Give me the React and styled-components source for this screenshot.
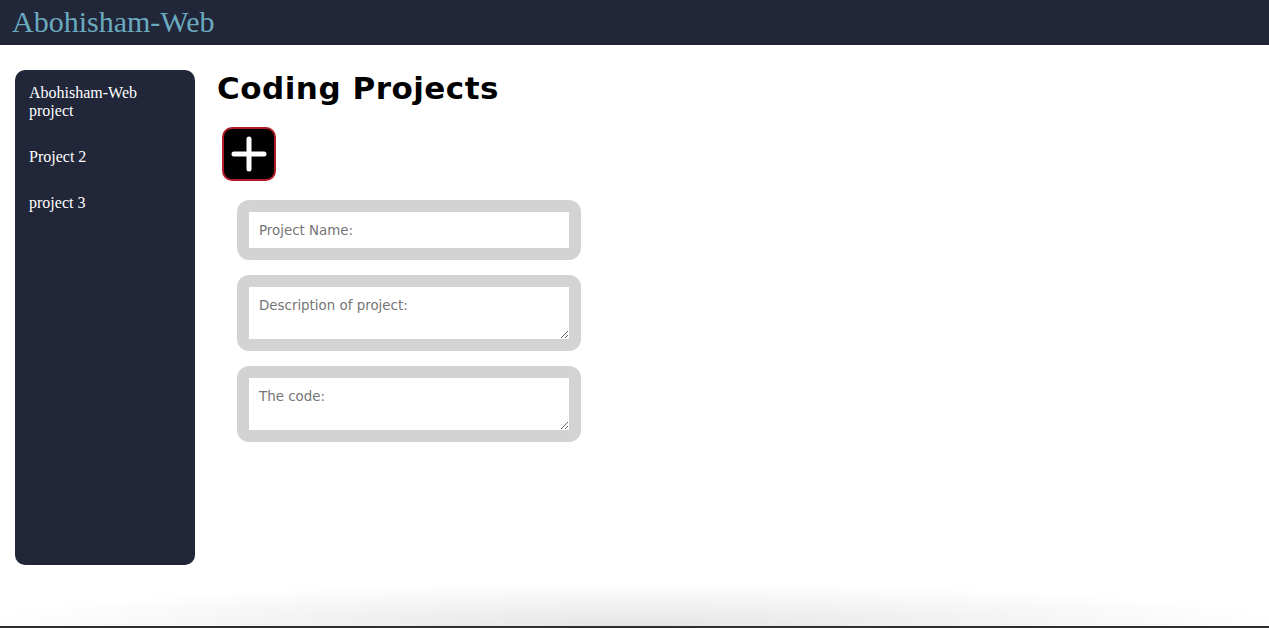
import React from "react";
import styled, { createGlobalStyle } from "styled-components";

const GlobalStyle = createGlobalStyle`
  html, body {
    margin: 0;
    padding: 0;
    background: #ffffff;
  }
  body {
    font-family: "Liberation Serif", "Times New Roman", serif;
    overflow: hidden;
  }
`;

const Page = styled.div`
  width: 1269px;
  height: 628px;
  display: flex;
  flex-direction: column;
  position: relative;
  overflow: hidden;
  background: #ffffff;
`;

const TopBar = styled.header`
  height: 45px;
  background-color: #212639;
  display: flex;
  align-items: center;
  padding: 0 12px;
  flex-shrink: 0;
`;

const Brand = styled.div`
  font-family: "Liberation Serif", "Times New Roman", serif;
  font-size: 30px;
  color: #6aaabf;
  line-height: 1;
  margin-top: -1px;
`;

const Body = styled.div`
  display: flex;
  align-items: flex-start;
  padding: 25px 15px 0 15px;
  gap: 22px;
  flex: 1;
`;

const Sidebar = styled.nav`
  width: 180px;
  height: 495px;
  background-color: #212639;
  border-radius: 10px;
  padding: 14px 14px;
  box-sizing: border-box;
  display: flex;
  flex-direction: column;
  gap: 28px;
  flex-shrink: 0;
`;

const SideItem = styled.div`
  color: #ffffff;
  font-family: "Liberation Serif", "Times New Roman", serif;
  font-size: 16px;
  line-height: 18px;
  cursor: pointer;
`;

const Main = styled.main`
  display: flex;
  flex-direction: column;
  align-items: flex-start;
`;

const Title = styled.h1`
  margin: 0;
  font-family: "DejaVu Sans", Verdana, sans-serif;
  font-weight: bold;
  font-size: 31px;
  line-height: 36px;
  color: #000000;
  letter-spacing: 0.5px;
`;

const AddButton = styled.button`
  margin: 21px 0 0 5px;
  width: 54px;
  height: 54px;
  border-radius: 10px;
  border: 2px solid #b01c2a;
  background: #000000;
  display: flex;
  align-items: center;
  justify-content: center;
  padding: 0;
  cursor: pointer;
`;

const Form = styled.form`
  margin: 19px 0 0 20px;
  display: flex;
  flex-direction: column;
  gap: 15px;
`;

const FieldBox = styled.div`
  background-color: #d3d3d3;
  border-radius: 12px;
  padding: 12px;
  width: 344px;
  box-sizing: border-box;
  display: flex;
`;

const TextInput = styled.input`
  width: 100%;
  height: 36px;
  box-sizing: border-box;
  border: none;
  outline: none;
  padding: 0 10px;
  font-family: "DejaVu Sans", Verdana, sans-serif;
  font-size: 13.4px;
  background: #ffffff;
  &::placeholder {
    color: #757575;
  }
`;

const TextArea = styled.textarea`
  width: 100%;
  height: 52px;
  box-sizing: border-box;
  border: none;
  outline: none;
  padding: 11px 10px 9px;
  font-family: "DejaVu Sans", Verdana, sans-serif;
  font-size: 13.4px;
  background: #ffffff;
  display: block;
  &::placeholder {
    color: #757575;
  }
`;

const BottomShade = styled.div`
  position: absolute;
  left: 0;
  right: 0;
  bottom: 2px;
  height: 44px;
  background: radial-gradient(ellipse 52% 100% at 50% 100%, rgba(0, 0, 0, 0.1), rgba(0, 0, 0, 0) 100%);
  border-bottom-right-radius: 8px;
  pointer-events: none;
`;

const BottomEdge = styled.div`
  position: absolute;
  left: 0;
  right: 0;
  bottom: 0;
  height: 2px;
  background: #2e2e2e;
`;

function PlusIcon() {
  return (
    <svg width="38" height="38" viewBox="0 0 38 38">
      <path
        d="M19 4 V34 M4 19 H34"
        stroke="#ffffff"
        strokeWidth="5"
        strokeLinecap="round"
        fill="none"
      />
    </svg>
  );
}

export default function App() {
  return (
    <>
      <GlobalStyle />
      <Page>
        <TopBar>
          <Brand>Abohisham-Web</Brand>
        </TopBar>
        <Body>
          <Sidebar>
            <SideItem>Abohisham-Web project</SideItem>
            <SideItem>Project 2</SideItem>
            <SideItem>project 3</SideItem>
          </Sidebar>
          <Main>
            <Title>Coding Projects</Title>
            <AddButton type="button" aria-label="Add project">
              <PlusIcon />
            </AddButton>
            <Form onSubmit={(e) => e.preventDefault()}>
              <FieldBox>
                <TextInput placeholder="Project Name:" />
              </FieldBox>
              <FieldBox>
                <TextArea placeholder="Description of project:" />
              </FieldBox>
              <FieldBox>
                <TextArea placeholder="The code:" />
              </FieldBox>
            </Form>
          </Main>
        </Body>
        <BottomShade />
        <BottomEdge />
      </Page>
    </>
  );
}
